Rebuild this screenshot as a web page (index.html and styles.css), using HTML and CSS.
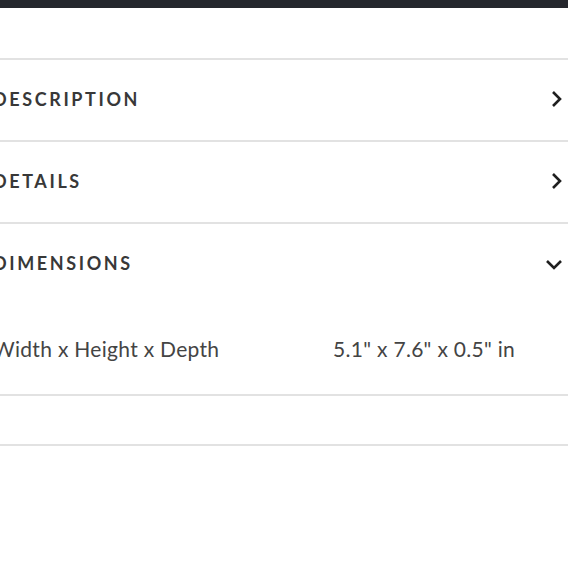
FILE: index.html
```html
<!DOCTYPE html>
<html>
<head>
<meta charset="utf-8">
<link rel="stylesheet" href="styles.css">
</head>
<body>
<div class="page">
  <div class="topbar"></div>
  <div class="spacer"></div>
  <div class="acc">
    <div class="acc-head">
      <span class="acc-title">DESCRIPTION</span>
      <svg class="chev" width="12" height="18" viewBox="0 0 12 18"><path d="M2 2 L9 9 L2 16" fill="none" stroke="#1f1f1f" stroke-width="2.6"/></svg>
    </div>
  </div>
  <div class="acc">
    <div class="acc-head">
      <span class="acc-title">DETAILS</span>
      <svg class="chev" width="12" height="18" viewBox="0 0 12 18"><path d="M2 2 L9 9 L2 16" fill="none" stroke="#1f1f1f" stroke-width="2.6"/></svg>
    </div>
  </div>
  <div class="acc">
    <div class="acc-head">
      <span class="acc-title">DIMENSIONS</span>
      <svg class="chev down" width="18" height="12" viewBox="0 0 18 12"><path d="M2 2 L9 9 L16 2" fill="none" stroke="#1f1f1f" stroke-width="2.6"/></svg>
    </div>
    <div class="acc-body">
      <span class="dim-label">Width x Height x Depth</span>
      <span class="dim-value">5.1" x 7.6" x 0.5" in</span>
    </div>
  </div>
  <div class="acc empty"></div>
  <div class="acc last"></div>
</div>
</body>
</html>
```

FILE: styles.css
```css
html, body {
  margin: 0;
  padding: 0;
  background: #fff;
}
body {
  font-family: Lato, "Open Sans", sans-serif;
  color: #3a3a3a;
  overflow: hidden;
}
.page {
  width: 575px;
  margin-left: -7px;
}
.topbar {
  height: 8px;
  background: #25272d;
}
.spacer {
  height: 50px;
}
.acc {
  border-top: 2px solid #e2e2e2;
}
.acc-head {
  height: 80px;
  display: flex;
  align-items: center;
  justify-content: space-between;
  padding-right: 5px;
}
.acc-title {
  font-size: 18px;
  font-weight: 700;
  letter-spacing: 2.6px;
  color: #383838;
  padding-bottom: 2px;
}
.chev {
  display: block;
  padding-bottom: 2px;
}
.chev.down {
  padding-top: 4px;
}
.acc-body {
  display: flex;
  height: 90px;
  align-items: flex-start;
  padding-top: 32px;
  box-sizing: border-box;
}
.dim-label {
  width: 340px;
  font-size: 21px;
  letter-spacing: 0.3px;
  color: #444;
}
.dim-value {
  font-size: 21px;
  letter-spacing: 0.3px;
  color: #444;
}
.acc.empty {
  height: 48px;
}
.acc.last {
  height: 140px;
}
```
